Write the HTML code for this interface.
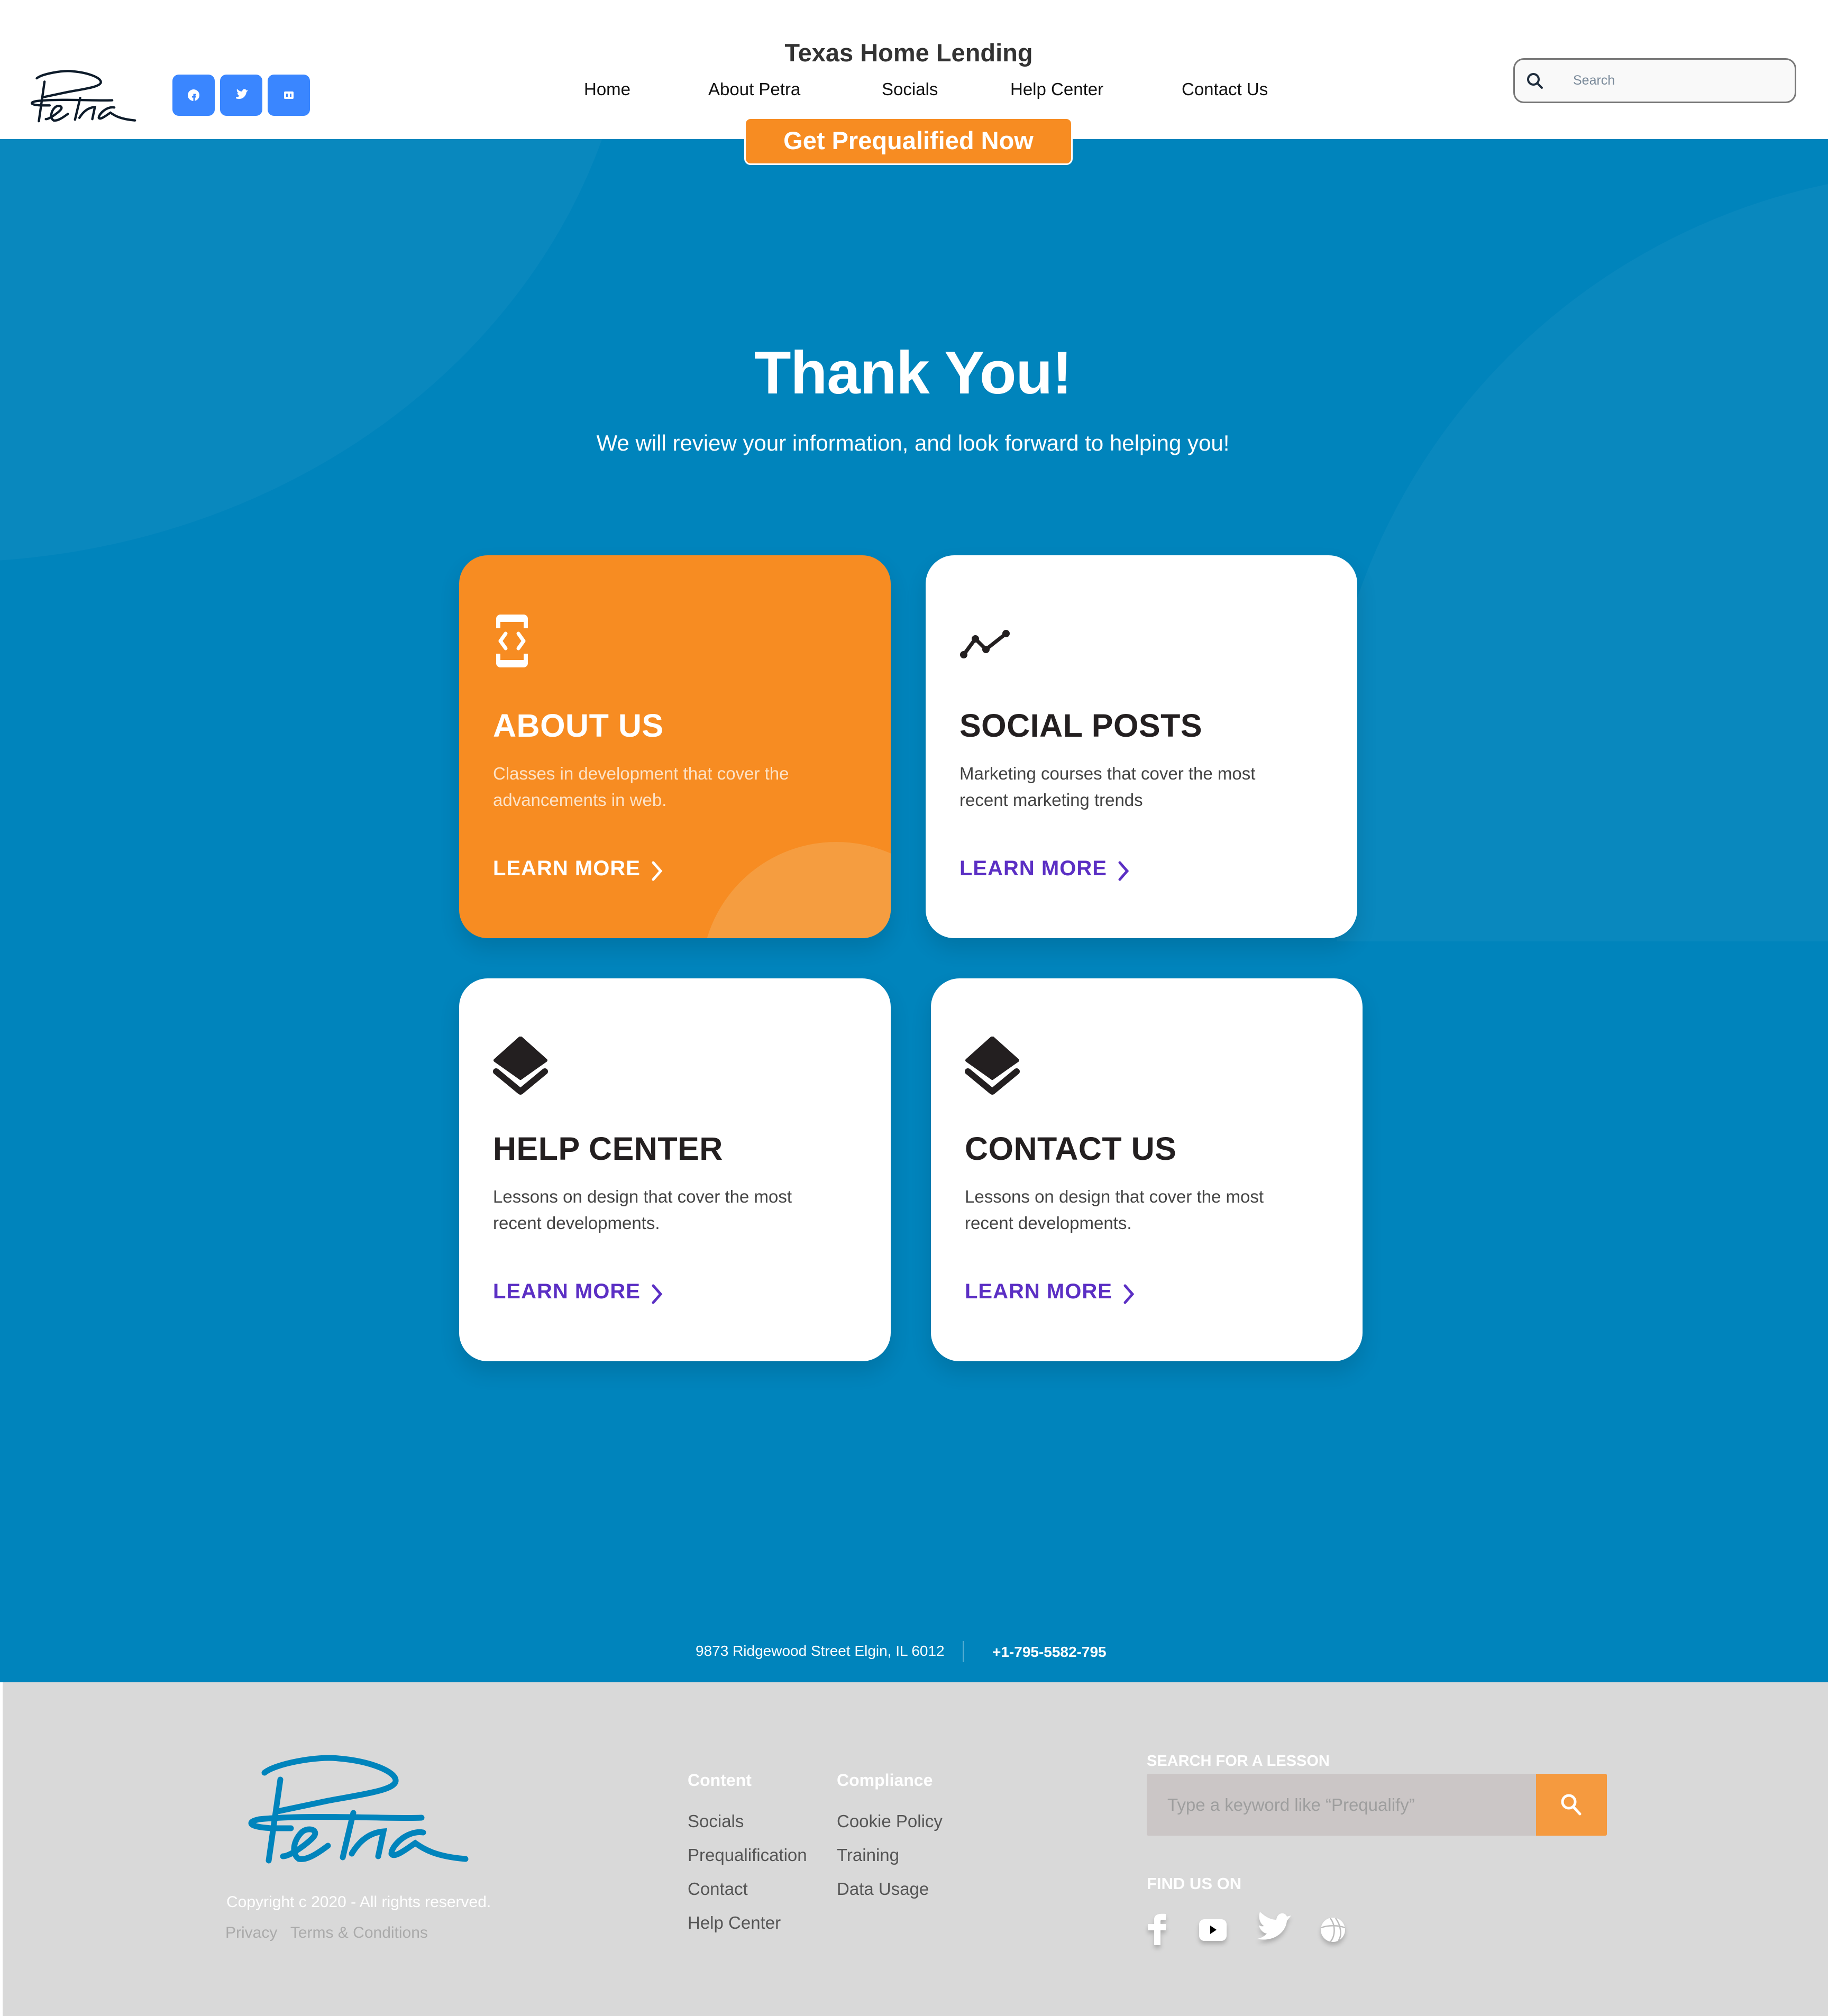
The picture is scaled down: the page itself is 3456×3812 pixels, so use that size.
<!DOCTYPE html>
<html><head><meta charset="utf-8">
<style>
*{margin:0;padding:0;box-sizing:border-box}
body{width:3456px;height:3812px;position:relative;overflow:hidden;font-family:"Liberation Sans",sans-serif;background:#fff}
.abs{position:absolute}
.hero{position:absolute;left:0;top:263px;width:3456px;height:2918px;background:#0084bc;overflow:hidden}
.circ{position:absolute;border-radius:50%;background:rgba(255,255,255,0.035)}
.nav{position:absolute;top:150px;font-size:33px;color:#111}
.sb{position:absolute;top:141px;width:80px;height:78px;background:#3a86ff;border-radius:12px}
.card{position:absolute;width:816px;height:724px;border-radius:54px;background:#fff;overflow:hidden;box-shadow:0 20px 40px rgba(0,0,0,0.12)}
.card h2{position:absolute;left:64px;top:287px;font-size:61px;font-weight:700;color:#231f20;letter-spacing:0.5px}
.card p{position:absolute;left:64px;top:388px;font-size:33px;line-height:50px;color:#444;width:640px}
.card .lm{position:absolute;left:64px;top:570px;font-size:40px;font-weight:700;color:#5b2fc4;letter-spacing:1px}
.card .lm svg{position:absolute;left:295px;top:5px}
.card .ic{position:absolute;left:64px;top:110px}
.orange{background:#f78c22}
.orange h2,.orange .lm{color:#fff}
.orange p{color:#fde2c6}
.flink{position:absolute;font-size:33px;color:#555}
.fh{position:absolute;font-size:31px;font-weight:700;color:#fff}
</style></head><body>

<svg class="abs" style="left:50px;top:125px" width="210" height="115" viewBox="20 35 430 215">
<g fill="none" stroke="#0d1b2a" stroke-width="9" stroke-linecap="round">
<path d="M60 72 C80 55 160 40 200 45 C260 50 310 70 308 88 C305 105 250 112 180 125 L85 145"/>
<path d="M352 157 C300 160 150 150 60 160 C30 165 35 175 75 177 L110 177"/>
<path d="M90 85 L68 238"/>
<path d="M95 230 C110 230 150 200 155 190 C160 178 140 175 130 185 C115 200 110 225 125 235 C140 238 160 225 180 210"/>
<path d="M228 148 L208 232"/>
<path d="M225 225 C240 200 260 185 285 183 L275 230"/>
<path d="M360 185 C330 180 300 210 300 225 C305 235 330 215 345 205 C360 215 380 230 440 235"/>
</g></svg>
<div class="sb" style="left:326px"><svg width="80" height="78" viewBox="0 0 80 78"><circle cx="40" cy="39" r="11" fill="#fff"/><path d="M41 50 V38 h4 M37 42 h7" stroke="#3a86ff" stroke-width="3" fill="none"/></svg></div>
<div class="sb" style="left:416px"><svg width="80" height="78" viewBox="0 0 80 78"><path d="M30 45 c8 3 18 0 20-12 l3-3 -3 0 c-2-4-8-3-8 2 c-5 0-8-3-10-5 c-1 4 1 7 3 8 l-2 0 c0 3 2 5 4 5 c-2 2-5 3-7 3z" fill="#fff"/></svg></div>
<div class="sb" style="left:506px"><svg width="80" height="78" viewBox="0 0 80 78"><rect x="31" y="32" width="18" height="14" rx="2" fill="#fff"/><rect x="35" y="36" width="3" height="6" fill="#3a86ff"/><rect x="42" y="36" width="3" height="6" fill="#3a86ff"/></svg></div>

<div class="abs" style="left:1318px;top:72px;width:800px;text-align:center;font-size:47px;font-weight:700;color:#333">Texas Home Lending</div>
<div class="nav" style="left:1104px">Home</div>
<div class="nav" style="left:1339px">About Petra</div>
<div class="nav" style="left:1667px">Socials</div>
<div class="nav" style="left:1910px">Help Center</div>
<div class="nav" style="left:2234px">Contact Us</div>

<div class="abs" style="left:2861px;top:110px;width:535px;height:85px;border:3px solid #777;border-radius:20px;background:#f9f9f9">
<svg class="abs" style="left:20px;top:22px" width="40" height="40" viewBox="0 0 40 40"><circle cx="15" cy="15" r="10" stroke="#1f2d3d" stroke-width="4" fill="none"/><path d="M22 22 L31 31" stroke="#1f2d3d" stroke-width="4" stroke-linecap="round"/></svg>
<div class="abs" style="left:110px;top:25px;font-size:25px;color:#7a8a9a">Search</div></div>

<div class="hero">
<div class="circ" style="left:-1400px;top:-1500px;width:2600px;height:2300px"></div>
<div class="abs" style="left:0;top:0;width:3456px;height:1517px;overflow:hidden">
<div class="circ" style="left:2500px;top:60px;width:2400px;height:2400px"></div>
</div>
</div>

<div class="abs" style="left:1407px;top:222px;width:621px;height:90px;background:#f78c22;border:3px solid #fff;border-radius:12px;color:#fff;font-size:47px;font-weight:700;text-align:center;line-height:82px">Get Prequalified Now</div>

<div class="abs" style="left:1126px;top:640px;width:1200px;text-align:center;font-size:114px;font-weight:800;color:#fff;letter-spacing:-1px">Thank You!</div>
<div class="abs" style="left:926px;top:814px;width:1600px;text-align:center;font-size:42px;color:#fff">We will review your information, and look forward to helping you!</div>

<div class="card orange" style="left:868px;top:1050px">
<div class="abs" style="left:458px;top:542px;width:510px;height:510px;border-radius:50%;background:#f59d40"></div>
<svg class="ic" width="72" height="104" viewBox="0 0 72 104"><path d="M6 28 V10 a8 8 0 0 1 8-8 h44 a8 8 0 0 1 8 8 v18 h-8 v-12 h-44 v12z M6 76 v18 a8 8 0 0 0 8 8 h44 a8 8 0 0 0 8-8 v-18 h-8 v12 h-44 v-12z" fill="#fff"/><path d="M24 38 L14 52 L24 66 M48 38 L58 52 L48 66" stroke="#fff" stroke-width="7" fill="none" stroke-linecap="round" stroke-linejoin="round"/></svg>
<h2>ABOUT US</h2>
<p>Classes in development that cover the advancements in web.</p>
<div class="lm">LEARN MORE<svg width="30" height="44" viewBox="0 0 30 44"><path d="M8 6 L22 22 L8 38" stroke="#fff" stroke-width="5" fill="none" stroke-linecap="round"/></svg></div>
</div>

<div class="card" style="left:1750px;top:1050px">
<svg class="ic" style="top:138px" width="100" height="60" viewBox="0 0 100 60"><path d="M8 50 L30 20 L50 40 L88 10" stroke="#231f20" stroke-width="7" fill="none" stroke-linejoin="round"/><circle cx="8" cy="50" r="7" fill="#231f20"/><circle cx="30" cy="20" r="7" fill="#231f20"/><circle cx="50" cy="40" r="7" fill="#231f20"/><circle cx="88" cy="10" r="7" fill="#231f20"/></svg>
<h2>SOCIAL POSTS</h2>
<p>Marketing courses that cover the most recent marketing trends</p>
<div class="lm">LEARN MORE<svg width="30" height="44" viewBox="0 0 30 44"><path d="M8 6 L22 22 L8 38" stroke="#5b2fc4" stroke-width="5" fill="none" stroke-linecap="round"/></svg></div>
</div>

<div class="card" style="left:868px;top:1850px">
<svg class="ic" width="104" height="112" viewBox="0 0 104 112"><path d="M52 2 L100 45 L52 79 L4 45z" fill="#231f20" stroke="#231f20" stroke-width="6" stroke-linejoin="round"/><path d="M6 66 L52 104 L98 66" stroke="#231f20" stroke-width="12" fill="none" stroke-linecap="round" stroke-linejoin="round"/></svg>
<h2>HELP CENTER</h2>
<p>Lessons on design that cover the most recent developments.</p>
<div class="lm">LEARN MORE<svg width="30" height="44" viewBox="0 0 30 44"><path d="M8 6 L22 22 L8 38" stroke="#5b2fc4" stroke-width="5" fill="none" stroke-linecap="round"/></svg></div>
</div>

<div class="card" style="left:1760px;top:1850px">
<svg class="ic" width="104" height="112" viewBox="0 0 104 112"><path d="M52 2 L100 45 L52 79 L4 45z" fill="#231f20" stroke="#231f20" stroke-width="6" stroke-linejoin="round"/><path d="M6 66 L52 104 L98 66" stroke="#231f20" stroke-width="12" fill="none" stroke-linecap="round" stroke-linejoin="round"/></svg>
<h2>CONTACT US</h2>
<p>Lessons on design that cover the most recent developments.</p>
<div class="lm">LEARN MORE<svg width="30" height="44" viewBox="0 0 30 44"><path d="M8 6 L22 22 L8 38" stroke="#5b2fc4" stroke-width="5" fill="none" stroke-linecap="round"/></svg></div>
</div>

<div class="abs" style="left:1315px;top:3106px;font-size:28px;color:#fff">9873 Ridgewood Street Elgin, IL 6012</div>
<div class="abs" style="left:1820px;top:3103px;width:2px;height:40px;background:rgba(255,255,255,0.35)"></div>
<div class="abs" style="left:1876px;top:3108px;font-size:28px;font-weight:700;color:#fff">+1-795-5582-795</div>

<div class="abs" style="left:5px;top:3181px;width:3451px;height:631px;background:#d9d9d9"></div>
<svg class="abs" style="left:440px;top:3280px" width="500" height="280" viewBox="0 0 500 280">
<g fill="none" stroke="#0084bc" stroke-width="11" stroke-linecap="round">
<path d="M60 72 C80 55 160 40 200 45 C260 50 310 70 308 88 C305 105 250 112 180 125 L85 145"/>
<path d="M357 157 C300 160 150 150 50 160 C25 165 30 175 75 177 L110 177"/>
<path d="M90 85 L68 238"/>
<path d="M95 230 C110 230 150 200 155 190 C160 178 140 175 130 185 C115 200 110 225 125 235 C140 238 160 225 180 210"/>
<path d="M228 148 L208 232"/>
<path d="M225 225 C240 200 260 185 285 183 L275 230"/>
<path d="M360 185 C330 180 300 210 300 225 C305 235 330 215 345 205 C360 215 380 230 440 235"/>
</g></svg>
<div class="abs" style="left:428px;top:3580px;font-size:30px;color:#fff">Copyright c 2020 - All rights reserved.</div>
<div class="abs" style="left:426px;top:3638px;font-size:30px;color:#aaa">Privacy &nbsp; Terms &amp; Conditions</div>

<div class="fh" style="left:1300px;top:3348px;font-size:32px">Content</div>
<div class="fh" style="left:1582px;top:3348px;font-size:32px">Compliance</div>
<div class="flink" style="left:1300px;top:3425px">Socials</div>
<div class="flink" style="left:1300px;top:3489px">Prequalification</div>
<div class="flink" style="left:1300px;top:3553px">Contact</div>
<div class="flink" style="left:1300px;top:3617px">Help Center</div>
<div class="flink" style="left:1582px;top:3425px">Cookie Policy</div>
<div class="flink" style="left:1582px;top:3489px">Training</div>
<div class="flink" style="left:1582px;top:3553px">Data Usage</div>

<div class="fh" style="left:2168px;top:3314px;font-size:29px">SEARCH FOR A LESSON</div>
<div class="abs" style="left:2168px;top:3354px;width:736px;height:117px;background:#cbc6c6;border-radius:3px 0 0 3px"></div>
<div class="abs" style="left:2207px;top:3394px;font-size:33px;color:#9e9e9e">Type a keyword like “Prequalify”</div>
<div class="abs" style="left:2904px;top:3354px;width:134px;height:117px;background:#f59a3f;border-radius:0 3px 3px 0">
<svg class="abs" style="left:45px;top:36px" width="44" height="46" viewBox="0 0 44 46"><circle cx="17" cy="17" r="12" stroke="#fff" stroke-width="5" fill="none"/><path d="M26 27 L38 40" stroke="#fff" stroke-width="5" stroke-linecap="round"/></svg></div>

<div class="fh" style="left:2168px;top:3544px;font-size:31px">FIND US ON</div>
<svg class="abs" style="left:2160px;top:3610px;filter:drop-shadow(0 6px 4px rgba(0,0,0,0.2))" width="420" height="80" viewBox="2160 3610 420 80">
<path d="M2182 3678 V3650 H2170 V3638 H2182 V3630 C2182 3620 2190 3618 2204 3619 V3630 H2197 C2194 3630 2194 3632 2194 3634 V3638 H2204 V3650 H2194 V3678z" fill="#fff"/>
<rect x="2267" y="3629" width="52" height="41" rx="10" fill="#fff"/>
<path d="M2288 3641 L2300 3649 L2288 3657z" fill="#000"/>
<path d="M2377 3666 C2400 3672 2430 3660 2433 3632 L2441 3622 L2433 3624 C2430 3615 2415 3615 2413 3630 C2400 3630 2390 3622 2382 3615 C2378 3628 2383 3638 2390 3642 C2385 3643 2382 3642 2380 3640 C2382 3650 2390 3656 2395 3656 C2390 3662 2383 3665 2377 3666z" fill="#fff"/>
<circle cx="2520" cy="3649" r="23" fill="#fff"/>
<path d="M2498 3645 C2510 3640 2530 3640 2543 3645 M2515 3627 C2525 3640 2525 3660 2515 3672 M2525 3627 C2535 3640 2538 3660 2530 3670" stroke="#bbb" stroke-width="2.5" fill="none"/>
</svg>
</body></html>
